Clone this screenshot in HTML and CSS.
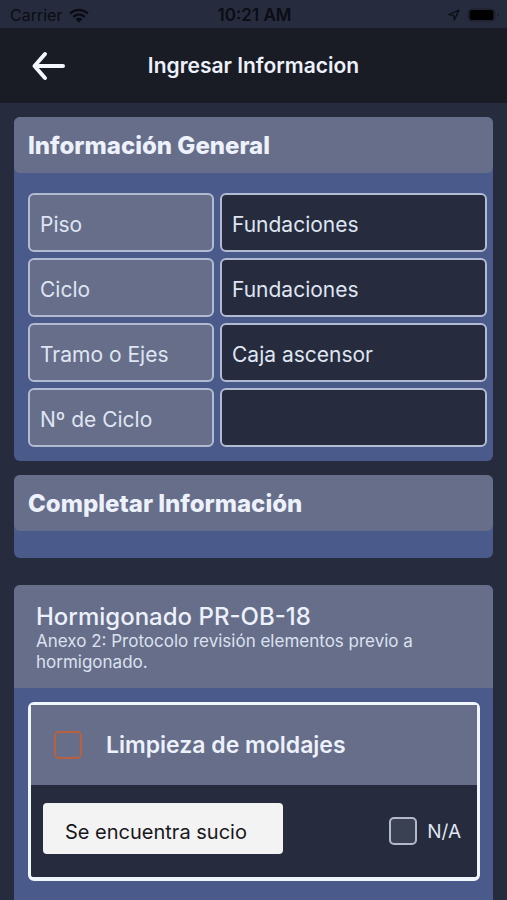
FILE: index.html
```html
<!DOCTYPE html>
<html lang="es">
<head>
<meta charset="utf-8">
<meta name="viewport" content="width=device-width, initial-scale=1">
<title>Ingresar Informacion</title>
<link rel="stylesheet" href="styles.css">
</head>
<body>
<div class="status">
  <div class="status-left">
    <span>Carrier</span>
    <svg class="wifi" viewBox="0 0 20 15" aria-hidden="true">
      <path d="M1.2 5.6a12.6 12.6 0 0 1 17.6 0M4.3 8.9a8.2 8.2 0 0 1 11.4 0" fill="none" stroke="currentColor" stroke-width="2.5"/>
      <path d="M6.6 11.2a4.9 4.9 0 0 1 6.8 0L10 14.6z" fill="currentColor"/>
    </svg>
  </div>
  <div class="clock">10:21 AM</div>
  <div class="status-right">
    <svg class="location" viewBox="0 0 12 12" aria-hidden="true">
      <path d="M11 1 1 5.7l4.7.6.6 4.7z" fill="none" stroke="currentColor" stroke-width="1.3" stroke-linejoin="round"/>
    </svg>
    <svg class="battery" viewBox="0 0 32 14" aria-hidden="true">
      <rect x="1" y="1" width="27" height="12" rx="4" fill="none" stroke="#1b1e2a"/>
      <rect x="2.500" y="2" width="24" height="10" rx="2.500" fill="#000"/>
      <path d="M30 5v4q1.500-.6 1.500-2T30 5z" fill="#1b1e2a"/>
    </svg>
  </div>
</div>
<header class="bar">
  <button class="back" type="button" aria-label="Volver">
    <svg viewBox="0 0 34 30" aria-hidden="true">
      <path d="M32 15H4M14 3 3.500 15 14 27" fill="none" stroke="currentColor" stroke-width="4" stroke-linecap="round" stroke-linejoin="round"/>
    </svg>
  </button>
  <h1>Ingresar Informacion</h1>
</header>
<main>
  <section class="card">
    <h2>Información General</h2>
    <div class="fields">
      <label for="piso">Piso</label>
      <input id="piso" type="text" value="Fundaciones">
      <label for="ciclo">Ciclo</label>
      <input id="ciclo" type="text" value="Fundaciones">
      <label for="tramo">Tramo o Ejes</label>
      <input id="tramo" type="text" value="Caja ascensor">
      <label for="numero">Nº de Ciclo</label>
      <input id="numero" type="text">
    </div>
  </section>
  <section class="card card-empty">
    <h2>Completar Información</h2>
  </section>
  <section class="card protocol">
    <div class="protocol-head">
      <h3>Hormigonado PR-OB-18</h3>
      <p>Anexo 2: Protocolo revisión elementos previo a hormigonado.</p>
    </div>
    <div class="item">
      <div class="item-head">
        <input class="check check-main" id="limpieza" type="checkbox">
        <label for="limpieza">Limpieza de moldajes</label>
      </div>
      <div class="item-body">
        <button class="state" type="button">Se encuentra sucio</button>
        <div class="na">
          <input class="check" id="na" type="checkbox">
          <label for="na">N/A</label>
        </div>
      </div>
    </div>
  </section>
</main>
</body>
</html>
```
FILE: styles.css
```css
* { box-sizing: border-box; }

body {
  margin: 0;
  min-height: 100vh;
  display: flex;
  flex-direction: column;
  background: #262b3d;
  color: #edf1fb;
  font-family: Inter, "Liberation Sans", sans-serif;
  font-size: 21px;
}

h1, h2, h3, p { margin: 0; }

button, input { font: inherit; }

.status {
  display: grid;
  grid-template-columns: 1fr auto 1fr;
  align-items: center;
  height: 28px;
  padding: 2px 8px 0 10px;
  color: #0b0d14;
  font-size: 16px;
}

.status-left, .status-right {
  display: flex;
  align-items: center;
  gap: 7px;
}

.status-right { justify-content: flex-end; }

.clock {
  font-size: 17px;
  font-weight: 600;
  line-height: 20px;
}

.wifi { width: 20px; height: 15px; }
.location { width: 12px; height: 12px; }
.battery { width: 32px; height: 14px; }

.bar {
  display: grid;
  grid-template-columns: 64px 1fr 64px;
  align-items: center;
  height: 75px;
  padding: 0 16px;
  background: #1a1c25;
}

.back {
  display: flex;
  justify-content: center;
  padding: 8px 0;
  border: 0;
  background: none;
  color: #f4f7ff;
}

.back svg { width: 34px; height: 30px; }

h1 {
  font-size: 21px;
  font-weight: 600;
  text-align: center;
}

main {
  flex: 1;
  display: flex;
  flex-direction: column;
  gap: 14px;
  padding: 14px 14px 0;
}

.card {
  border-radius: 6px;
  background: #4a5a8a;
}

h2 {
  padding: 2px 14px 0;
  border-radius: 6px;
  background: #666e8a;
  font-size: 24px;
  font-weight: 800;
  line-height: 54px;
}

.fields {
  display: grid;
  grid-template-columns: 186px 1fr;
  gap: 6px;
  padding: 20px 6px 14px 14px;
}

.fields label, .fields input {
  width: 100%;
  height: 59px;
  padding: 3px 10px 0;
  border: 2px solid #b3bbd2;
  border-radius: 6px;
  color: #dfe5f2;
}

.fields label {
  background: #666e8a;
  line-height: 53px;
}

.fields input { background: #262b3d; }

.card-empty { padding-bottom: 27px; }

.protocol {
  flex: 1;
  margin-top: 13px;
  padding-bottom: 19px;
  border-radius: 6px 6px 0 0;
}

.protocol-head {
  padding: 18px 22px 15px;
  border-radius: 6px 6px 0 0;
  background: #666e8a;
}

h3 {
  font-size: 24px;
  font-weight: 500;
  line-height: 28px;
}

.protocol-head p {
  color: #dce1ef;
  font-size: 17px;
  line-height: 21px;
}

.item {
  margin: 14px 13px 0 14px;
  border: 3px solid #f0f5fe;
  border-bottom-width: 4px;
  border-radius: 6px;
  background: #262b3d;
}

.item-head {
  display: flex;
  align-items: center;
  gap: 24px;
  height: 80px;
  padding: 0 23px;
  background: #666e8a;
  font-size: 23px;
  font-weight: 600;
}

.item-body {
  display: flex;
  align-items: center;
  justify-content: space-between;
  padding: 18px 16px 23px 12px;
}

.check {
  appearance: none;
  width: 28px;
  height: 28px;
  margin: 0;
  border: 2px solid #b3b9c8;
  border-radius: 5px;
  background: #3a4153;
}

.check-main {
  border-color: #b9603e;
  background: transparent;
}

.check:checked { background: #b9603e; }

.state {
  width: 240px;
  height: 51px;
  padding: 7px 22px 0;
  border: 0;
  border-radius: 4px;
  background: #f3f3f3;
  color: #17181c;
  font-size: 20px;
  text-align: left;
}

.na {
  display: flex;
  align-items: center;
  gap: 10px;
  padding-top: 5px;
  color: #dfe5f2;
  font-size: 19px;
}
```
